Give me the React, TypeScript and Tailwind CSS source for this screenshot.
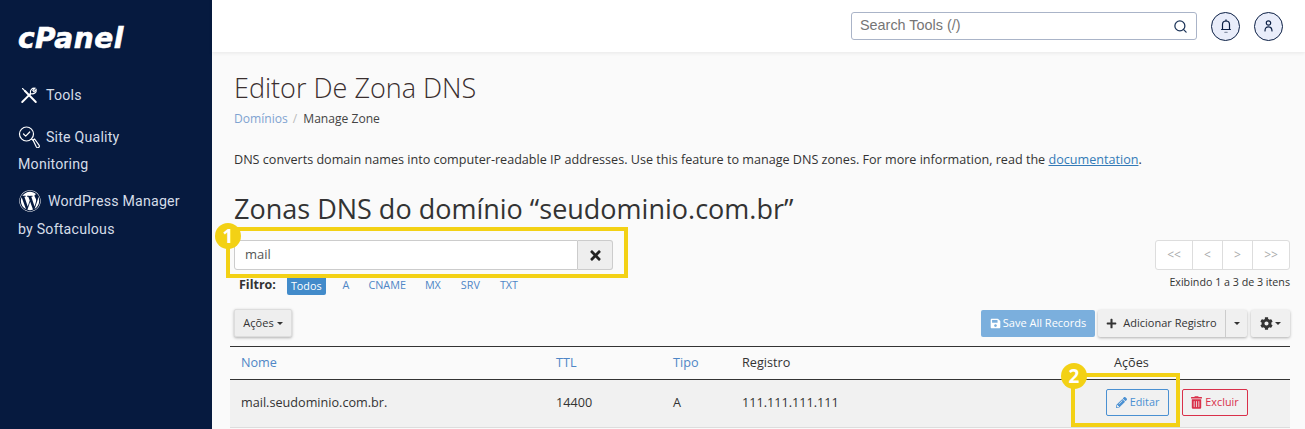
import { Search } from 'lucide-react';
import { FaCog, FaPencilAlt, FaPlus, FaSave, FaTimes, FaTrashAlt, FaWordpress } from 'react-icons/fa';

function Caret({ className = '' }: { className?: string }) {
  return <span className={`inline-block h-0 w-0 border-x-[3px] border-t-[3px] border-x-transparent border-t-current ${className}`} />;
}

function ToolsIcon() {
  return (
    <svg viewBox="0 0 18 18" className="h-[18px] w-[18px]" fill="none" stroke="#fff" strokeWidth="1.300" strokeLinecap="round">
      <path d="M2.500 2.500 5 5" strokeWidth="1.100" />
      <path d="M5 5 15.800 16" strokeWidth="1.900" />
      <path d="M2.200 16 10.400 7.800" strokeWidth="1.900" />
      <path d="M10.400 6.800C10 4 12 1.800 15 2.200l-2.200 2.300 1.100 1.200 2.300-2.100C16.700 6.200 14.500 8.100 11.400 7.800" strokeWidth="1.100" />
    </svg>
  );
}

function QualityIcon() {
  return (
    <svg viewBox="0 0 22 22" className="h-[22px] w-[22px]" fill="none" stroke="#fff" strokeWidth="1.200" strokeLinecap="round" strokeLinejoin="round">
      <circle cx="8.500" cy="8" r="7" />
      <path d="m5.500 8 2.200 2.200 4-4.200" />
      <path d="m13.500 13 2 1.600" />
      <path d="m15 14 1.600-1 4.400 6.200a1.300 1.300 0 0 1-2.600 1.800Z" />
    </svg>
  );
}

function BellIcon() {
  return (
    <svg viewBox="0 0 10 15" className="h-[15px] w-[10px]" fill="none" stroke="#0b1f44" strokeWidth="1.200" strokeLinecap="round">
      <path d="M1.500 10.500V5.500a3.500 3.500 0 0 1 7 0v5" />
      <path d="M0.600 10.500h8.800" />
      <path d="M5 .8v1.200" />
      <path d="M3.800 13.300h2.400" stroke="#8a94a8" />
    </svg>
  );
}

function UserIcon() {
  return (
    <svg viewBox="0 0 9 12" className="h-[12px] w-[9px]" fill="none" stroke="#0b1f44" strokeWidth="1.200" strokeLinecap="round">
      <circle cx="4.500" cy="3" r="2.200" />
      <path d="M1 11c0-3 1-4.200 3.500-4.200S8 8 8 11" />
    </svg>
  );
}

function Sidebar() {
  return (
    <aside className="w-[212px] shrink-0 bg-[#061a3f] pl-[18px] font-['Roboto',sans-serif] text-[14.2px] tracking-[0.2px] text-[#d5dde8]">
      <div className="mt-[24px] h-[30px] font-['DejaVu_Sans',sans-serif] text-[28px] leading-[30px] font-bold tracking-[0.500px] text-white italic [-webkit-text-stroke:0.6px_white]">cPanel</div>
      <div className="mt-[30px] flex items-center gap-[8px] pl-[2px] leading-[22px]">
        <ToolsIcon />
        Tools
      </div>
      <div className="mt-[20px] flex items-center gap-[6px] leading-[22px]">
        <QualityIcon />
        Site Quality
      </div>
      <div className="mt-[5px] leading-[22px]">Monitoring</div>
      <div className="mt-[14px] flex items-center gap-[7px] pl-[1px] leading-[24px]">
        <FaWordpress className="h-[22px] w-[22px] text-white" />
        WordPress Manager
      </div>
      <div className="mt-[5px] leading-[22px]">by Softaculous</div>
    </aside>
  );
}

function Topbar() {
  return (
    <header className="flex h-[52px] items-center justify-end bg-white pr-[22px] shadow-[0_1px_4px_rgba(0,0,0,0.08)]">
      <div className="flex h-[28px] w-[346px] items-center justify-between rounded-[3px] border border-[#aab4c8] bg-white px-2">
        <span className="font-['Liberation_Sans',sans-serif] text-[14.4px] text-[#757575]">Search Tools (/)</span>
        <Search className="h-[15px] w-[15px] text-[#1b3358]" strokeWidth={2} />
      </div>
      <button className="ml-[14px] flex h-[29px] w-[29px] items-center justify-center rounded-full border border-[#0b1f44] bg-[#e9edfa]">
        <BellIcon />
      </button>
      <button className="ml-[14px] flex h-[29px] w-[29px] items-center justify-center rounded-full border border-[#0b1f44] bg-[#e9edfa]">
        <UserIcon />
      </button>
    </header>
  );
}

function ZoneTable() {
  return (
    <div className="-ml-1 mt-[9px] border-t border-[#333] text-[12.650px]">
      <div className="grid h-[33px] grid-cols-[315px_117px_69px_372px_1fr] items-center border-b border-[#333] pb-[2px] pl-[11px]">
        <a className="text-[#4f86c6]">Nome</a>
        <a className="text-[#4f86c6]">TTL</a>
        <a className="text-[#4f86c6]">Tipo</a>
        <span>Registro</span>
        <span>Ações</span>
      </div>
      <div className="grid h-[48px] grid-cols-[315px_117px_69px_364px_1fr] items-center border-b border-[#ddd] bg-[#f1f1f1] pb-[2px] pl-[11px]">
        <span>mail.seudominio.com.br.</span>
        <span>14400</span>
        <span>A</span>
        <span>111.111.111.111</span>
        <div className="flex gap-[13px] text-[10.800px]">
          <button className="flex h-[27px] w-[63px] items-center justify-center gap-[3px] rounded-[2px] border border-[#4a90d2] text-[#4a90d2]">
            <FaPencilAlt className="h-[11px] w-[11px]" />
            Editar
          </button>
          <button className="flex h-[27px] w-[66px] items-center justify-center gap-[3px] rounded-[2px] border border-[#d9304a] text-[#d9304a]">
            <FaTrashAlt className="h-[13px] w-[11px]" />
            Excluir
          </button>
        </div>
      </div>
    </div>
  );
}

export default function App() {
  return (
    <div className="flex h-[429px] w-[1305px] overflow-hidden bg-[#fafafa] font-['Open_Sans',sans-serif] text-[#333]">
      <Sidebar />
      <main className="min-w-0 flex-1">
        <Topbar />
        <div className="relative pt-[18px] pr-[15px] pl-[22px]">
          <h1 className="text-[27px] leading-[36px] font-light text-[#3a2f2f]">Editor De Zona DNS</h1>
          <div className="mt-[3px] flex gap-[5px] text-[12.100px] leading-[20px]">
            <a className="text-[#7fa3d1]">Domínios</a>
            <span className="text-[#bbb]">/</span>
            <span className="ml-[1px] text-[#444]">Manage Zone</span>
          </div>
          <p className="mt-[21px] text-[12.600px] leading-[20px]">
            DNS converts domain names into computer-readable IP addresses. Use this feature to manage DNS zones. For more information, read the{' '}
            <a className="text-[#337ab7] underline">documentation</a>.
          </p>
          <h2 className="mt-[20px] text-[27px] leading-[38px] text-[#333]">Zonas DNS do domínio “seudominio.com.br”</h2>

          <div className="mt-[12px] flex items-start justify-between">
            <div>
              <div className="flex h-[30px] w-[379px]">
                <div className="flex flex-1 items-center rounded-l-[3px] border border-[#ccc] bg-white pl-[10px] text-[13px] text-[#555]">mail</div>
                <button className="flex w-[35px] items-center justify-center rounded-r-[3px] border border-l-0 border-[#ccc] bg-[#eee]">
                  <FaTimes className="h-[15px] w-[15px] text-[#222]" />
                </button>
              </div>
              <div className="mt-[5px] flex h-[20px] items-center pl-[5px] text-[10.800px]">
                <span className="mr-[11px] text-[12.500px] font-bold text-[#333]">Filtro:</span>
                <span className="rounded-[2px] bg-[#428bca] px-[4px] py-[2px] leading-[15px] text-white">Todos</span>
                <span className="ml-[17px] text-[#4f86c6]">A</span>
                <span className="ml-[19px] text-[#4f86c6]">CNAME</span>
                <span className="ml-[19px] text-[#4f86c6]">MX</span>
                <span className="ml-[20px] text-[#4f86c6]">SRV</span>
                <span className="ml-[20px] text-[#4f86c6]">TXT</span>
              </div>
            </div>
            <div className="flex flex-col items-end">
              <div className="flex h-[30px] w-[135px] rounded-[3px] border border-[#ddd] bg-white text-[12px] text-[#aaa]">
                <span className="flex w-[37px] items-center justify-center border-r border-[#ddd]">&lt;&lt;</span>
                <span className="flex w-[30px] items-center justify-center border-r border-[#ddd]">&lt;</span>
                <span className="flex w-[30px] items-center justify-center border-r border-[#ddd]">&gt;</span>
                <span className="flex flex-1 items-center justify-center">&gt;&gt;</span>
              </div>
              <span className="mt-[4px] text-[10.700px] leading-[16px]">Exibindo 1 a 3 de 3 itens</span>
            </div>
          </div>

          <div className="mt-[14px] flex items-center justify-between text-[11px]">
            <button className="flex h-[28px] w-[58px] items-center justify-center gap-[3px] rounded-[2px] border border-[#ddd] bg-[#eee] shadow-[0_1px_3px_rgba(0,0,0,0.3)]">
              Ações
              <Caret />
            </button>
            <div className="flex">
              <button className="flex h-[27px] w-[114px] items-center justify-center gap-[2px] rounded-[2px] bg-[#7bafdd] text-white">
                <FaSave className="h-[11px] w-[11px]" />
                Save All Records
              </button>
              <div className="ml-[3px] flex h-[27px] w-[149px] rounded-[2px] bg-[#f0f0f0] text-[#333] shadow-[0_1px_3px_rgba(0,0,0,0.3)]">
                <span className="flex flex-1 items-center justify-center gap-[6px] border-r border-[#ccc]">
                  <FaPlus className="h-[11px] w-[11px]" />
                  Adicionar Registro
                </span>
                <span className="flex w-[21px] items-center justify-center">
                  <Caret />
                </span>
              </div>
              <button className="ml-[4px] flex h-[27px] w-[39px] items-center justify-center gap-[2px] rounded-[2px] bg-[#f0f0f0] shadow-[0_1px_3px_rgba(0,0,0,0.3)]">
                <FaCog className="h-[13px] w-[13px]" />
                <Caret />
              </button>
            </div>
          </div>

          <ZoneTable />

          {/* marcações amarelas do tutorial */}
          <div className="absolute top-[175px] left-[14px] h-[51px] w-[402px] border-4 border-[#f3d115]" />
          <span className="absolute top-[171px] left-[3px] flex h-[26px] w-[26px] items-center justify-center rounded-full bg-[#f3d115] text-[19px] font-bold text-white">1</span>
          <div className="absolute top-[321px] left-[859px] h-[54px] w-[109px] border-4 border-[#f3d115]" />
          <span className="absolute top-[311px] left-[849px] flex h-[26px] w-[26px] items-center justify-center rounded-full bg-[#f3d115] text-[19px] font-bold text-white">2</span>
        </div>
      </main>
    </div>
  );
}
